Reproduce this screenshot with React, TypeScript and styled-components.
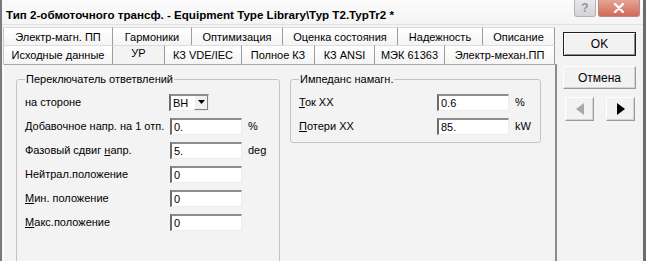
import React from 'react';
import styled, { createGlobalStyle } from 'styled-components';

const Global = createGlobalStyle`
  html, body { margin: 0; padding: 0; background: #f3f3f3; }
  body { font-family: "Liberation Sans", Arial, sans-serif; font-size: 11px; color: #000; }
`;

const Window = styled.div`
  width: 646px;
  height: 261px;
  overflow: hidden;
  box-sizing: border-box;
  display: flex;
  flex-direction: column;
  background: #f3f3f3;
  border-left: 2px solid #7a7a7a;
  border-right: 3px solid #6c6c6c;
`;

const TitleBar = styled.div`
  height: 25px;
  flex: none;
  display: flex;
  align-items: flex-start;
  background: linear-gradient(#fbfbfb, #f4f4f4);
  border-bottom: 1px solid #e2e2e2;
  box-sizing: border-box;
`;

const Title = styled.div`
  font-family: "Liberation Sans", Arial, sans-serif;
  font-weight: bold;
  font-size: 11.6px;
  line-height: 14px;
  padding: 8px 0 0 4px;
  white-space: nowrap;
`;

const TitleButtons = styled.div`
  margin-left: auto;
  margin-right: 3px;
  display: flex;
  gap: 2px;
`;

const HelpButton = styled.div`
  width: 22px;
  height: 17px;
  box-sizing: border-box;
  border: 1px solid #b4b4b4;
  border-top: none;
  border-radius: 0 0 3px 3px;
  background: linear-gradient(#e8e8e8, #d4d4d4);
  color: #8a98a8;
  font-weight: bold;
  font-size: 12px;
  display: flex;
  align-items: center;
  justify-content: center;
`;

const CloseButton = styled.div`
  width: 42px;
  height: 17px;
  box-sizing: border-box;
  border: 1px solid #b88;
  border-top: none;
  border-radius: 0 0 3px 3px;
  background: linear-gradient(#e6a494, #cf6a58);
  display: flex;
  align-items: center;
  justify-content: center;
`;

const Body = styled.div`
  flex: 1;
  display: flex;
  min-height: 0;
`;

const TabControl = styled.div`
  width: 554px;
  flex: none;
  display: flex;
  flex-direction: column;
  padding: 2px 0 0 1px;
`;

const TabRow = styled.div<{ $h: number }>`
  display: flex;
  height: ${(p) => p.$h}px;
  flex: none;
`;

const Tab = styled.div<{ $w: number; $active?: boolean; $first?: boolean }>`
  width: ${(p) => p.$w}px;
  flex: none;
  box-sizing: border-box;
  display: flex;
  align-items: center;
  justify-content: center;
  white-space: nowrap;
  background: ${(p) => (p.$active ? '#f3f3f3' : 'linear-gradient(#ffffff, #f4f4f4)')};
  border-top: 1px solid #dcdcdc;
  border-right: 1px solid #9c9c9c;
  border-left: ${(p) => (p.$first ? '1px solid #c8c8c8' : 'none')};
  padding-bottom: ${(p) => (p.$active ? 4 : 0)}px;
`;

const Panel = styled.div`
  flex: 1;
  box-sizing: border-box;
  border-top: 1px solid #a8a8a8;
  border-left: 1px solid #ffffff;
  border-right: 2px solid #8a8a8a;
  padding: 8px 0 0 12px;
  display: flex;
  align-items: flex-start;
  gap: 10px;
  overflow: hidden;
`;

const GroupBox = styled.fieldset<{ $w: number; $tail?: number }>`
  width: ${(p) => p.$w}px;
  flex: none;
  box-sizing: border-box;
  margin: 0;
  border: 1px solid #c4c4c4;
  border-radius: 3px;
  padding: 4px 8px ${(p) => p.$tail ?? 4}px 8px;
  min-inline-size: 0;
`;

const GroupTitle = styled.legend`
  padding: 0 1px;
  line-height: 13px;
`;

const FieldGrid = styled.div<{ $label: number }>`
  display: grid;
  grid-template-columns: ${(p) => p.$label}px 72px auto;
  grid-auto-rows: 24px;
  align-items: center;
`;

const Label = styled.span`
  white-space: nowrap;
`;

const Key = styled.span`
  text-decoration: underline;
  text-underline-offset: 1px;
`;

const TextBox = styled.div`
  height: 17px;
  box-sizing: border-box;
  background: #fff;
  border-style: solid;
  border-width: 2px 1px 1px 2px;
  border-color: #8c8c8c #ececec #ececec #6c6c6c;
  padding: 0 0 0 2px;
  line-height: 14px;
`;

const Unit = styled.span`
  padding-left: 6px;
`;

const Combo = styled.div`
  width: 40px;
  height: 17px;
  box-sizing: border-box;
  background: #fff;
  border-style: solid;
  border-width: 2px 1px 1px 2px;
  border-color: #8c8c8c #ececec #ececec #6c6c6c;
  display: flex;
  align-items: stretch;
  margin-left: -1px;
`;

const ComboText = styled.span`
  flex: 1;
  padding-left: 2px;
  line-height: 14px;
`;

const ComboButton = styled.span`
  width: 14px;
  box-sizing: border-box;
  background: #f0f0f0;
  border-left: 1px solid #fff;
  border-right: 1px solid #808080;
  border-bottom: 1px solid #808080;
  display: flex;
  align-items: center;
  justify-content: center;
`;

const SideColumn = styled.div`
  flex: 1;
  display: flex;
  flex-direction: column;
  align-items: flex-start;
  padding: 7px 0 0 6px;
`;

const Button = styled.div<{ $default?: boolean }>`
  width: 73px;
  height: ${(p) => (p.$default ? 24 : 23)}px;
  box-sizing: border-box;
  display: flex;
  align-items: center;
  justify-content: center;
  background: #f2f2f2;
  border: 1px solid;
  border-color: ${(p) => (p.$default ? '#202020' : '#ffffff #9a9a9a #9a9a9a #ffffff')};
  box-shadow: ${(p) =>
    p.$default
      ? 'inset 1px 1px 0 #ffffff, inset -1px -1px 0 #8a8a8a'
      : 'inset -1px -1px 0 #d4d4d4'};
  margin-bottom: ${(p) => (p.$default ? 10 : 8)}px;
  font-size: 12px;
`;

const ArrowRow = styled.div`
  width: 72px;
  display: flex;
  justify-content: space-between;
  padding-left: 2px;
  box-sizing: border-box;
`;

const ArrowButton = styled.div`
  width: 29px;
  height: 24px;
  box-sizing: border-box;
  background: #f2f2f2;
  border: 1px solid;
  border-color: #ffffff #9a9a9a #9a9a9a #ffffff;
  box-shadow: inset -1px -1px 0 #d4d4d4;
  display: flex;
  align-items: center;
  justify-content: center;
`;

const row1 = [
  { t: 'Электр-магн. ПП', w: 110 },
  { t: 'Гармоники', w: 79 },
  { t: 'Оптимизация', w: 91 },
  { t: 'Оценка состояния', w: 115 },
  { t: 'Надежность', w: 85 },
  { t: 'Описание', w: 72 },
];

const row2 = [
  { t: 'Исходные данные', w: 110 },
  { t: 'УР', w: 52, active: true },
  { t: 'КЗ VDE/IEC', w: 77 },
  { t: 'Полное КЗ', w: 73 },
  { t: 'КЗ ANSI', w: 60 },
  { t: 'МЭК 61363', w: 70 },
  { t: 'Электр-механ.ПП', w: 110 },
];

export default function App() {
  return (
    <>
      <Global />
      <Window>
        <TitleBar>
          <Title>Тип 2-обмоточного трансф. - Equipment Type Library\Тур T2.TypTr2 *</Title>
          <TitleButtons>
            <HelpButton>?</HelpButton>
            <CloseButton>
              <svg width="12" height="10" viewBox="0 0 12 10">
                <path d="M2 1 L10 9 M10 1 L2 9" stroke="#fff" strokeWidth="2.4" strokeLinecap="round" />
              </svg>
            </CloseButton>
          </TitleButtons>
        </TitleBar>
        <Body>
          <TabControl>
            <TabRow $h={18}>
              {row1.map((t, i) => (
                <Tab key={t.t} $w={t.w} $first={i === 0}>
                  {t.t}
                </Tab>
              ))}
            </TabRow>
            <TabRow $h={19}>
              {row2.map((t, i) => (
                <Tab key={t.t} $w={t.w} $first={i === 0} $active={t.active}>
                  {t.t}
                </Tab>
              ))}
            </TabRow>
            <Panel>
              <GroupBox $w={264} $tail={60}>
                <GroupTitle>Переключатель ответвлений</GroupTitle>
                <FieldGrid $label={145}>
                  <Label>на стороне</Label>
                  <Combo>
                    <ComboText>ВН</ComboText>
                    <ComboButton>
                      <svg width="7" height="4" viewBox="0 0 7 4">
                        <polygon points="0,0 7,0 3.5,4" fill="#000" />
                      </svg>
                    </ComboButton>
                  </Combo>
                  <span />
                  <Label>
                    <Key>Д</Key>обавочное напр. на 1 отп.
                  </Label>
                  <TextBox>0.</TextBox>
                  <Unit>%</Unit>
                  <Label>
                    Фазовый сдвиг <Key>н</Key>апр.
                  </Label>
                  <TextBox>5.</TextBox>
                  <Unit>deg</Unit>
                  <Label>Нейтрал.положение</Label>
                  <TextBox>0</TextBox>
                  <span />
                  <Label>
                    <Key>М</Key>ин. положение
                  </Label>
                  <TextBox>0</TextBox>
                  <span />
                  <Label>
                    <Key>М</Key>акс.положение
                  </Label>
                  <TextBox>0</TextBox>
                  <span />
                </FieldGrid>
              </GroupBox>
              <GroupBox $w={251}>
                <GroupTitle>Импеданс намагн.</GroupTitle>
                <FieldGrid $label={138}>
                  <Label>
                    <Key>Т</Key>ок ХХ
                  </Label>
                  <TextBox>0.6</TextBox>
                  <Unit>%</Unit>
                  <Label>
                    <Key>П</Key>отери ХХ
                  </Label>
                  <TextBox>85.</TextBox>
                  <Unit>kW</Unit>
                </FieldGrid>
              </GroupBox>
            </Panel>
          </TabControl>
          <SideColumn>
            <Button $default>OK</Button>
            <Button>Отмена</Button>
            <ArrowRow>
              <ArrowButton>
                <svg width="8" height="12" viewBox="0 0 8 12">
                  <polygon points="8,0 8,12 0,6" fill="#a8a8a8" />
                </svg>
              </ArrowButton>
              <ArrowButton>
                <svg width="8" height="12" viewBox="0 0 8 12">
                  <polygon points="0,0 0,12 8,6" fill="#000" />
                </svg>
              </ArrowButton>
            </ArrowRow>
          </SideColumn>
        </Body>
      </Window>
    </>
  );
}
